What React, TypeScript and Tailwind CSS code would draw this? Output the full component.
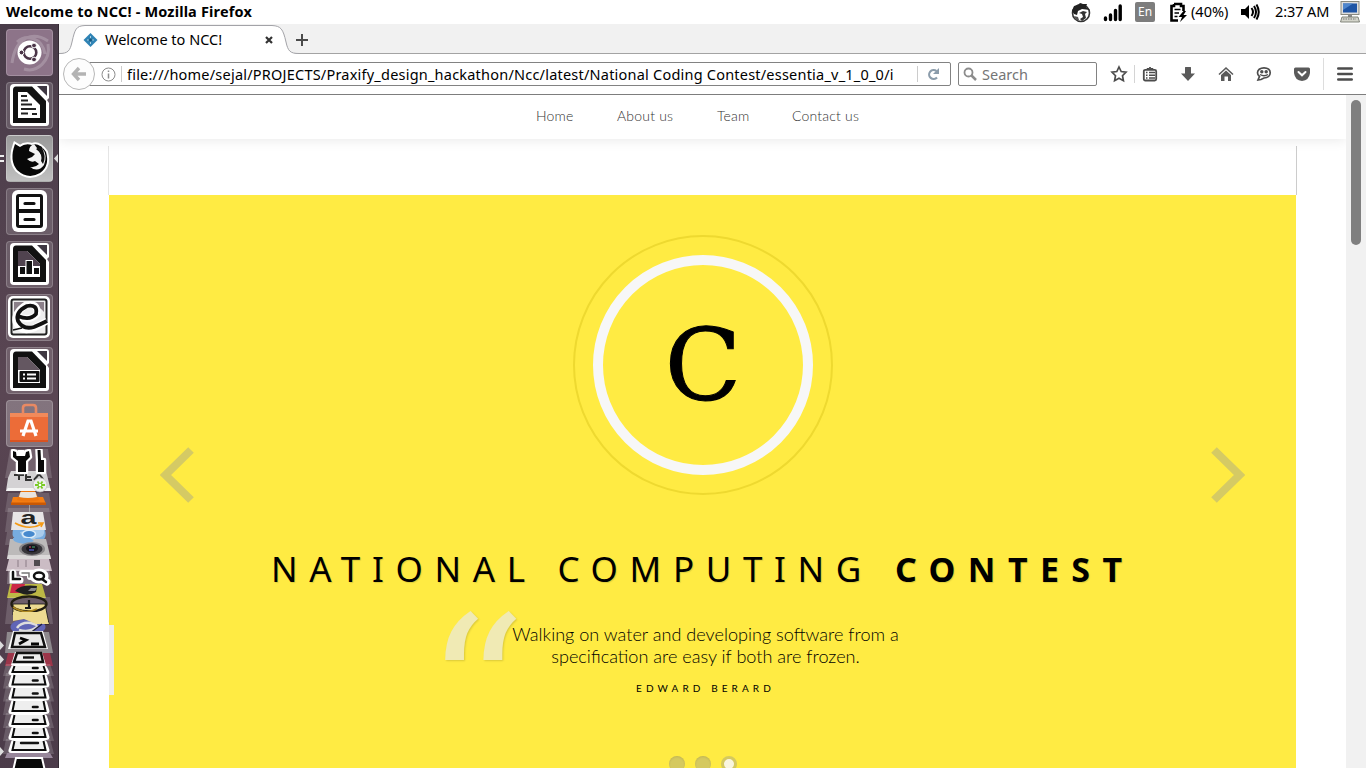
import type { ReactNode } from "react";

const UI = "font-['Noto_Sans',sans-serif]";

function Tile({ children, className = "" }: { children: ReactNode; className?: string }) {
  return (
    <div className={`h-[47px] w-[47px] shrink-0 overflow-hidden rounded-[4px] border border-white/20 ${className || "bg-white/15"}`}>
      <svg viewBox="0 0 47 47" className="-m-px h-[47px] w-[47px]">{children}</svg>
    </div>
  );
}

function Doc({ children }: { children: ReactNode }) {
  return (
    <g>
      <path d="M8 2H40Q43 2 43 5V16L41 18L43 21V41Q43 44 40 44H8Q4 44 4 40V6Q4 2 8 2Z" fill="#fff" />
      <path d="M31 4H41V14Z" fill="#3e3742" />
      <path d="M10 4.500H26L40 19V41H7V8Q7 4.500 10 4.500Z" fill="#111" />
      <path d="M12 10H21L34 23V36H12Z" fill="#fff" />
      {children}
    </g>
  );
}

function Drive({ y, h = 13, dash = "right" }: { y: number; h?: number; dash?: string }) {
  return (
    <g>
      <path d={`M6 ${y - 1}H50L54 ${y + h + 1}H3Z`} fill="#fff" opacity=".16" />
      <path d={`M13 ${y}H44Q46 ${y} 47 ${y + 2}L49.500 ${y + h - 3}Q49.500 ${y + h} 46 ${y + h}H11Q8 ${y + h} 8.500 ${y + h - 3}L11 ${y + 2}Q11 ${y} 13 ${y}Z`} fill="#fff" />
      <path d={`M14.500 ${y + 1}L12.500 ${y + h - 3}H45.500L43.500 ${y + 1}`} fill="#eee" stroke="#0c0c0c" strokeWidth="2" />
      {dash === "right" ? (
        <path d={`M33 ${y + h - 7}H37.500`} stroke="#111" strokeWidth="2.600" strokeLinecap="round" />
      ) : (
        <path d={`M21 ${y + 3}H38`} stroke="#111" strokeWidth="2.4" strokeLinecap="round" />
      )}
    </g>
  );
}

function FoldedStack() {
  return (
    <svg viewBox="0 449 59 319" className="block h-[319px] w-[59px] shrink-0">
      <path d="M10 449H48L52 478H5Z" fill="#fff" opacity=".16" />
      <path d="M8 478L11 471H46L51 491H6Z" fill="#d4d2d4" />
      <path d="M8 488H50L51 491H6Z" fill="#f4f4f4" />
      <path d="M14 475H24M19 475V480M26 474V480H32M26 477H31M34 480L39 474L43 479" fill="none" stroke="#333" strokeWidth="2" />
      <path d="M13 451L16 452L16.500 456H25L26 452L29 451L30 457L26 461V472H18V461L13 457Z" fill="#080808" stroke="#fff" strokeWidth="4.500" strokeLinejoin="round" paintOrder="stroke" />
      <path d="M18 450H24V455H18Z" fill="#fff" />
      <path d="M37.500 450H40.500L41 460H44V472H38V460Z" fill="#080808" stroke="#fff" strokeWidth="4.500" strokeLinejoin="round" paintOrder="stroke" />
      <circle cx="40" cy="485" r="7" fill="#eee" stroke="#bbb" strokeWidth=".7" />
      <path d="M35 485H45M37.500 481.500L42.500 488.500M42.500 481.500L37.500 488.500" stroke="#79cb25" strokeWidth="1.800" />
      <circle cx="40" cy="485" r="1.300" fill="#fff" />
      <path d="M8 493H49L52 512H5Z" fill="#fff" opacity=".14" />
      <path d="M13 497H43L46 504H11Z" fill="#f57e12" />
      <path d="M21 491H35L39 500Q28 503 17 500Z" fill="#ee7711" />
      <path d="M20.500 492H35.500L37 497Q28 499 19 497Z" fill="#e8e4e0" />
      <path d="M11 502.500H46V505H11Z" fill="#c95804" />
      <path d="M29.500 505V513" stroke="#aaa" strokeWidth=".8" />
      <path d="M8 508H49L53 532H5Z" fill="#fff" opacity=".15" />
      <path d="M13 512H43L46 530H11Z" fill="#e7e5e6" />
      <text x="20.500" y="524" textLength="16" lengthAdjust="spacingAndGlyphs" className="font-['Liberation_Sans',sans-serif] text-[19px] font-bold" fill="#222">a</text>
      <path d="M15 523Q29 531 42 524M38 523L43 523L41 527" fill="none" stroke="#f49a15" strokeWidth="1.600" />
      <path d="M7 532H50L52 545H5Z" fill="#fff" opacity=".15" />
      <path d="M13 530H45Q48 541 37 542L32 544L24 542Q10 540 13 530Z" fill="#77acdf" />
      <path d="M20 532L31 530H44Q46 537 36 538L28 544L22 536Z" fill="#a9ccec" />
      <ellipse cx="29" cy="534" rx="6.500" ry="3.800" fill="#4689ce" stroke="#dcecf8" strokeWidth="1.500" />
      <path d="M10 539H46L51 559H7Z" fill="#bcbaba" />
      <path d="M13 538H30L34 541L27 544Q12 543 13 538Z" fill="#77acdf" />
      <path d="M8 555H50L51 559H7Z" fill="#dad8d8" />
      <ellipse cx="32" cy="549" rx="13" ry="7" fill="#8a888a" />
      <ellipse cx="32" cy="549" rx="10.500" ry="5.800" fill="#37353a" />
      <ellipse cx="32" cy="548.500" rx="6" ry="3.800" fill="#17151c" />
      <path d="M29 547H31" stroke="#a04050" strokeWidth="1.300" />
      <path d="M32 547H35" stroke="#3f8a60" strokeWidth="1.300" />
      <path d="M29 550H34" stroke="#5660cc" strokeWidth="1.300" />
      <path d="M9 559H49L52 571H6Z" fill="#cbbcc4" />
      <path d="M18 560V567M26 560V567" stroke="#8b7c86" />
      <path d="M34 560H40V566H34Z" fill="#504c50" />
      <path d="M8 569H49L52 584H7Z" fill="#fff" opacity=".25" />
      <g fill="none" strokeLinecap="round">
        <path d="M13 573V580H20M41 579L47 582" stroke="#fff" strokeWidth="7" />
        <path d="M22 573H30V577" stroke="#fff" strokeWidth="6" />
        <ellipse cx="39" cy="576" rx="6" ry="4" stroke="#fff" strokeWidth="7" />
        <path d="M13 572V579H20M42 579L46 582" stroke="#111" strokeWidth="2.500" />
        <path d="M22 573H29V577" stroke="#777" strokeWidth="1.500" />
        <ellipse cx="39" cy="576" rx="5" ry="3.500" fill="#fff" stroke="#111" strokeWidth="2.500" />
      </g>
      <path d="M10 584H42L46 598H7Z" fill="#bdb845" />
      <path d="M12 584H25L23 593H10Z" fill="#cc2946" />
      <path d="M15 591Q21 584 37 586L36 592Q28 597 20 593Z" fill="#202020" />
      <path d="M31 588H37L35 591H28Z" fill="#888" />
      <path d="M8 597H50L53 624H5Z" fill="#fff" opacity=".16" />
      <path d="M13 604H45L49 624H30L26 616L13 615Z" fill="#eddb91" stroke="#111" strokeWidth=".8" />
      <ellipse cx="29" cy="604" rx="17.500" ry="7.500" fill="none" stroke="#211d12" strokeWidth="2.400" />
      <path d="M13 607Q25 615 37 609" fill="none" stroke="#ad8821" strokeWidth="1.600" />
      <path d="M29 600V608M25 608H31" stroke="#181818" strokeWidth="2.200" />
      <ellipse cx="28" cy="627" rx="17.500" ry="8" fill="#6065b6" />
      <path d="M17 628Q21 622 31 623L37 625M19 630Q31 633 38 626" fill="none" stroke="#ddd" strokeWidth="2.500" />
      <path d="M13 612H44L49 624H36L24 619L13 621Z" fill="#eddb91" />
      <path d="M42 624L29 634" stroke="#202040" strokeWidth="1.500" />
      <path d="M7 632H49L53 653H5Z" fill="#8e898d" />
      <path d="M13 631H43L48 649H8Z" fill="#fff" />
      <path d="M15 633H41L45 647H12Z" fill="#e9e9e9" stroke="#111" strokeWidth="2.500" />
      <path d="M20 638L26 640L19 644M31 644H39" fill="none" stroke="#050505" strokeWidth="2.800" />
      <path d="M8 653H50L53 666H5Z" fill="#9b3549" />
      <path d="M15 652H42L46 665H11Z" fill="#fff" />
      <path d="M17 653H41L43 662H14Z" fill="#eee" stroke="#111" strokeWidth="2.500" />
      <path d="M23 657.500H34" stroke="#111" strokeWidth="2.400" />
      <Drive y={665} h={10} />
      <Drive y={674} h={13.5} />
      <Drive y={687} h={13.5} />
      <Drive y={700} h={14} />
      <Drive y={714} h={13} />
      <Drive y={727} h={13} />
      <Drive y={740} h={13} dash="mid" />
      <path d="M7 753H50L53 758H5Z" fill="#98879b" />
      <path d="M16 758H42L45 771H13Z" fill="#080808" stroke="#fff" strokeWidth="2" />
      <path d="M0 641L4 645.500L0 650ZM0 655L4 659.500L0 664ZM0 747L4 751.500L0 756Z" fill="#ddd" />
    </svg>
  );
}

function Launcher() {
  return (
    <aside className="flex h-[744px] w-[59px] shrink-0 flex-col border-r border-[#332a33] bg-linear-to-b from-[#493c49] via-[#5a4653] to-[#4b3b49]">
      <div className="relative flex h-[425px] flex-col items-center gap-[6px] pt-[5px]">
        <Tile className="bg-[#8d7489]">
          <path d="M6 34C10 6 28 3 42 12M42 15C45 32 31 44 18 40M11 13C20 5 36 8 39 25" fill="none" stroke="#fff" strokeWidth="3" opacity=".2" />
          <circle cx="23.500" cy="23.500" r="12" fill="#fff" />
          <circle cx="24" cy="23.500" r="6.300" fill="none" stroke="#4b3548" strokeWidth="2.600" />
          <g fill="#4b3548" stroke="#fff" strokeWidth="1"><circle cx="15.500" cy="23.500" r="2.400" /><circle cx="28" cy="16.500" r="2.400" /><circle cx="28" cy="30.500" r="2.400" /></g>
        </Tile>
        <Tile><Doc><path d="M15 14H21M15 18.500H22M15 22.500H26M15 27H30M15 31.500H22M26 32H31" stroke="#222" strokeWidth="2" /></Doc></Tile>
        <Tile className="bg-linear-to-b from-[#999] to-[#c0c0c0]">
          <path d="M9 9L14 12Q19 8 26 10Q33 7 40 17Q44 31 34 38Q22 45 11 35Q3 25 9 9Z" fill="#080808" stroke="#fff" strokeWidth="4" paintOrder="stroke" />
          <path d="M28 9Q23 11 23 16L29 19L26 22L21 24Q25 28 29 26L33 29Q29 33 24 32Q32 38 38 30Q42 20 36 13L36 21L31 13Z" fill="#f3f3f3" />
          <path d="M30 14Q37 19 35 26L37 29Q41 21 35 11Z" fill="#111" />
        </Tile>
        <Tile>
          <rect x="6" y="2" width="35" height="42" rx="6" fill="#fff" />
          <rect x="10" y="6" width="27" height="34" rx="3" fill="#111" />
          <path d="M13 9H34V21H13ZM13 25H34V37H13Z" fill="#fff" />
          <path d="M19 15.500H28M19 31.500H28" stroke="#111" strokeWidth="3.200" strokeLinecap="round" />
        </Tile>
        <Tile><Doc><path d="M12 10H21L34 23V25H12Z" fill="#50434f" /><path d="M14 26H19V33H14ZM20.500 20H26V33H20.500ZM28 27H33V33H28Z" fill="#111" stroke="#fff" strokeWidth="2" paintOrder="stroke" /></Doc></Tile>
        <Tile>
          <rect x="2" y="2" width="42" height="42" rx="5" fill="#fff" /><rect x="5.500" y="5.500" width="35" height="35" rx="2" fill="#eee" stroke="#222" strokeWidth="2" />
          <path d="M8 8H38V18Q30 8 18 14L8 27Z" fill="#8b8089" />
          <path d="M11 22Q24 28 31 20Q32 8 20 11Q8 19 10 28Q15 39 28 34L41 27" fill="none" stroke="#fff" strokeWidth="7" />
          <path d="M12 22Q24 27 30 20Q32 10 21 12Q9 18 12 27Q17 36 28 33Q35 30 41 27" fill="none" stroke="#111" strokeWidth="3.800" />
          <path d="M7 36L16 34" stroke="#111" strokeWidth="1.500" />
        </Tile>
        <Tile><Doc><path d="M12 10H21L34 23H12Z" fill="#645761" /><rect x="13.500" y="24" width="20" height="11" rx="1" fill="#111" /><path d="M17 27.500H19M21 27.500H30M17 31.500H19M21 31.500H30" stroke="#fff" strokeWidth="1.800" /></Doc></Tile>
        <Tile className="bg-white/25">
          <path d="M4 13H42V42H4Z" fill="#ec6c38" /><path d="M4 13H42V17H4Z" fill="#f28a5a" /><path d="M4 40H42V42H4Z" fill="#d95322" />
          <path d="M17 14V8Q17 5 20 5H27Q30 5 30 8V14" fill="none" stroke="#e88963" strokeWidth="2.600" />
          <path d="M17 36L22 21H25L30 36M14 31H32" fill="none" stroke="#fff" strokeWidth="3.200" />
        </Tile>
        <svg viewBox="0 0 59 12" className="absolute top-[129px] left-0 h-3 w-[59px]"><path d="M0 3H4M0 8H4" stroke="#eee" strokeWidth="2" /><path d="M58 1V10L54 5.500Z" fill="#ddd" /></svg>
      </div>
      <FoldedStack />
    </aside>
  );
}

function TopPanel() {
  return (
    <header className={`flex h-6 shrink-0 items-center bg-white pl-1.5 text-[14.5px] leading-[22px] text-black ${UI}`}>
      <b className="w-[1064px] pb-0.5 whitespace-nowrap tracking-[0.17px]">Welcome to NCC! - Mozilla Firefox</b>
      <svg viewBox="0 0 22 22" className="h-[22px] w-[22px] shrink-0">
        <circle cx="11" cy="12" r="8.500" fill="#fff" stroke="#333" strokeWidth="1.600" />
        <path d="M2 10L4 5L8 4L10 2L13 3L17 3L16 6L20 9L12 8L8 10L7 14L4 13Z" fill="#222" />
        <path d="M13 10L17 11L15 13L16 17L12 20L10 18L13 16L12 13L9 12Z" fill="#333" /><path d="M4 15L8 16L9 19L6 19Z" fill="#555" />
      </svg>
      <svg viewBox="0 0 20 20" className="ml-[11px] h-5 w-5 shrink-0"><path d="M2.500 16V17.500M7.500 13V17.500M12.500 8.500V17.500M17.200 4V17.500" stroke="#000" strokeWidth="3.400" strokeLinecap="round" /></svg>
      <span className="ml-3 h-5 w-5 shrink-0 rounded-[2px] bg-[#7d7d7d] text-center text-[12px] leading-5 text-white">En</span>
      <svg viewBox="0 0 20 22" className="ml-3.5 h-[22px] w-5 shrink-0">
        <path d="M5 3H12V5H14.500V10M9 19.500H2.500V5H5V3" fill="none" stroke="#000" strokeWidth="2.600" /><path d="M5.500 8.500H11.500M5.500 12H10M5.500 15.500H8.500" stroke="#000" strokeWidth="1.500" /><path d="M14.500 10L9.500 16H13L11 21L18 14H14.500L17 10Z" fill="#000" />
      </svg>
      <span className="ml-[2px] w-[49px] shrink-0 pb-0.5">(40%)</span>
      <svg viewBox="0 0 20 20" className="h-5 w-5 shrink-0"><path d="M1 7H5L9 3V17L5 13H1Z" fill="#000" /><path d="M11.500 6Q14.500 10 11.500 14M14 4Q18 10 14 16M16.500 2.500Q21 10 16.500 17.500" fill="none" stroke="#000" strokeWidth="2" /></svg>
      <span className="ml-[15px] w-[65px] shrink-0 pb-0.5 tracking-[-0.1px] whitespace-nowrap">2:37 AM</span>
      <svg viewBox="0 0 20 22" className="h-[22px] w-5 shrink-0">
        <rect x="1" y="0.500" width="18" height="13" fill="#ddd" stroke="#8a8a80" /><rect x="3" y="2.500" width="14" height="9" fill="#1f55a5" /><path d="M3 2.500H13L3 9Z" fill="#4f86cd" />
        <path d="M8 13.500H12V16H8Z" fill="#888" /><path d="M2 16H18L19.500 21H0.500Z" fill="#d3d4ca" stroke="#777b70" strokeWidth=".9" /><path d="M3 18H16" stroke="#777" strokeWidth="1" strokeDasharray="1.500 1" />
      </svg>
    </header>
  );
}

function TabStrip() {
  return (
    <div className={`relative flex h-[30px] shrink-0 border-b border-[#a3a3a3] bg-[#f1f1f1] text-[14.5px] leading-5 text-black ${UI}`}>
      <svg viewBox="0 0 260 30" className="absolute top-0 left-0 h-[30px] w-[260px]">
        <path d="M0 29.500C9 29.500 11 27 13 18C16 5 17 2 26 1.500H213C222 2 224 5 227 18C229 27 231 29.500 240 29.500V31H0Z" fill="#fff" />
        <path d="M0 29.500C9 29.500 11 27 13 18C16 5 17 2 26 1.500H213C222 2 224 5 227 18C229 27 231 29.500 240 29.500" fill="none" stroke="#a3a3a8" />
      </svg>
      <div className="relative flex h-[31px] items-center pl-6">
        <svg viewBox="0 0 16 16" className="h-4 w-4"><path d="M7.500 1L14.500 8L7.500 15L0.500 8Z" fill="#2f83b5" /><path d="M7.500 4V12M4 8H11" stroke="#b9d8e8" strokeWidth=".9" /><path d="M7.500 6L9.500 8L7.500 10L5.500 8Z" fill="#14577f" /></svg>
        <span className="ml-1.5 w-[160px] pb-0.5 whitespace-nowrap">Welcome to NCC!</span>
        <svg viewBox="0 0 8 8" className="h-2 w-2"><path d="M1 1L7 7M7 1L1 7" stroke="#333" strokeWidth="2.200" /></svg>
        <svg viewBox="0 0 14 14" className="ml-[22px] h-3.5 w-3.5"><path d="M7 1V13M1 7H13" stroke="#4a4a4a" strokeWidth="2" /></svg>
      </div>
    </div>
  );
}

function Toolbar() {
  return (
    <div className={`flex h-[41px] shrink-0 items-center border-b border-[#7d7d7d] bg-white text-[14.5px] text-black ${UI}`}>
      <div className="relative z-10 ml-1 flex h-8 w-8 shrink-0 items-center justify-center rounded-full border border-[#b8b8b8] bg-[#fdfdfd]">
        <svg viewBox="0 0 16 16" className="h-4 w-4"><path d="M8 2L2.500 8L8 14M3 8H15" fill="none" stroke="#b3b3b3" strokeWidth="3.400" /></svg>
      </div>
      <div className="-ml-1.5 flex h-6 w-[862px] shrink-0 items-center rounded-r-[2px] border border-[#828282] bg-white pl-[11px]">
        <svg viewBox="0 0 15 15" className="h-[15px] w-[15px] shrink-0"><circle cx="7.500" cy="7.500" r="6.500" fill="none" stroke="#8c8c8c" /><path d="M7.500 6.500V11.500M7.500 3.500V5" stroke="#8c8c8c" strokeWidth="1.500" /></svg>
        <span className="ml-[5px] h-4 w-px shrink-0 bg-[#ccc]" />
        <span className="ml-[5px] w-[768px] shrink-0 overflow-hidden pb-px leading-5 whitespace-nowrap tracking-[0.215px]">file:///home/sejal/PROJECTS/Praxify_design_hackathon/Ncc/latest/National Coding Contest/essentia_v_1_0_0/i</span>
        <span className="ml-[22px] h-4 w-px shrink-0 bg-[#ccc]" />
        <svg viewBox="0 0 13 13" className="ml-[9px] h-[13px] w-[13px] shrink-0"><path d="M10 9.500A4.500 4.500 0 1 1 9.500 3" fill="none" stroke="#8b9cab" strokeWidth="2.200" /><path d="M12 0V6H6Z" fill="#8b9cab" /></svg>
      </div>
      <div className="ml-[7px] flex h-6 w-[139px] shrink-0 items-center rounded-[2px] border border-[#828282] pl-1 text-[#757575]">
        <svg viewBox="0 0 14 14" className="h-3.5 w-3.5"><circle cx="5.500" cy="5.500" r="4" fill="none" stroke="#8c8c8c" strokeWidth="1.800" /><path d="M8.500 8.500L13 13" stroke="#8c8c8c" strokeWidth="2.500" /></svg>
        <span className="ml-[5px] pb-px leading-5">Search</span>
      </div>
      <svg viewBox="0 0 18 18" className="ml-[13px] h-[18px] w-[18px] shrink-0"><path d="M9 2L11.200 6.500L16 7.200L12.500 10.700L13.400 15.700L9 13.200L4.600 15.700L5.500 10.700L2 7.200L6.800 6.500Z" fill="none" stroke="#4c4c4c" strokeWidth="1.700" /></svg>
      <span className="ml-[6px] h-[18px] w-px shrink-0 bg-[#d4d4d4]" />
      <svg viewBox="0 0 16 16" className="ml-[7px] h-4 w-4 shrink-0"><rect x="1.800" y="3.800" width="12.400" height="10.700" rx="1.500" fill="none" stroke="#4c4c4c" strokeWidth="1.800" /><path d="M5 3.500V2.500H7L8 1L9 2.500H11V3.500Z" fill="#4c4c4c" stroke="#4c4c4c" /><path d="M4 6.500H5.500M7 6.500H13M4 9.200H5.500M7 9.200H13M4 12H5.500M7 12H13" stroke="#4c4c4c" strokeWidth="1.400" /></svg>
      <svg viewBox="0 0 16 16" className="ml-[22px] h-4 w-4 shrink-0"><path d="M5 1.500Q5 1 5.500 1H10.500Q11 1 11 1.500V7.500H15L8 15L1 7.500H5Z" fill="#5a5a5a" /></svg>
      <svg viewBox="0 0 16 16" className="ml-[22px] h-4 w-4 shrink-0"><path d="M1 8.500L8 2L15 8.500" fill="none" stroke="#5a5a5a" strokeWidth="1.600" /><path d="M3 9L8 4.500L13 9V15H10V10.500H6.500V15H3Z" fill="#5a5a5a" /></svg>
      <svg viewBox="0 0 16 16" className="ml-[22px] h-4 w-4 shrink-0"><path d="M8 1.800C12 1.800 14.200 4 14.200 6.800S12 12 8 12L5 13.500L2 14L3.500 10.500Q1.500 9 1.500 6.800C1.500 4 4 1.800 8 1.800Z" fill="none" stroke="#4c4c4c" strokeWidth="1.700" /><circle cx="5.800" cy="5.800" r="1.700" fill="#4c4c4c" /><circle cx="10.200" cy="5.800" r="1.700" fill="#4c4c4c" /><path d="M4 8.500Q8 11 12 8.500" fill="none" stroke="#4c4c4c" strokeWidth="1.400" /></svg>
      <svg viewBox="0 0 16 16" className="ml-[22px] h-4 w-4 shrink-0"><path d="M1.500 1.500H14.500Q16 1.500 16 3V7Q15 14.500 8 15Q1 14.500 0 7V3Q0 1.500 1.500 1.500Z" fill="#5a5a5a" /><path d="M4.500 6L8 9.300L11.500 6" fill="none" stroke="#fff" strokeWidth="2" strokeLinecap="round" /></svg>
      <span className="ml-[13px] h-8 w-px shrink-0 bg-[#ddd]" />
      <svg viewBox="0 0 16 14" className="ml-[13px] h-3.5 w-4 shrink-0"><path d="M1.300 1.500H14.700M1.300 7H14.700M1.300 12.500H14.700" stroke="#4c4c4c" strokeWidth="2.600" strokeLinecap="round" /></svg>
    </div>
  );
}

function Hero() {
  return (
    <section className="relative ml-[50px] h-[573px] w-[1187px] overflow-hidden bg-[#ffeb43] pt-10">
      <div className="ml-[464px] h-[260px] w-[260px] rounded-full border-2 border-[#eed930] p-[18px]">
        <div className="flex h-[220px] w-[220px] justify-center rounded-full border-[10px] border-[#f7f7f7]">
          <span className="font-['DejaVu_Serif',serif] text-[100px] leading-[202px] text-black [-webkit-text-stroke:1px_black]">C</span>
        </div>
      </div>
      <h1 className={`mt-[54px] flex h-10 items-start pl-[162px] leading-10 whitespace-nowrap text-black [text-shadow:1px_1px_1px_#00000020] ${UI}`}>
        <span className="w-[624px] text-[35px] tracking-[11.65px]">NATIONAL COMPUTING</span>
        <b className="text-[34px] tracking-[12.4px]">CONTEST</b>
      </h1>
      <blockquote className="mt-[34px] ml-[392px] h-[73px] w-[409px] text-center font-['Lato',sans-serif] text-[18.1px] leading-[22px] font-light text-black">
        <p>Walking on water and developing software from a<br />specification are easy if both are frozen.</p>
        <cite className="mt-[13px] block text-[10px] leading-4 font-normal tracking-[4.1px] not-italic">EDWARD BERARD</cite>
      </blockquote>
      <div className="mt-[60px] flex gap-2.5 pl-[560px]">
        <span className="h-4 w-4 rounded-full bg-[#d5c95f] shadow-[inset_0_1px_2px_#0000001a]" />
        <span className="h-4 w-4 rounded-full bg-[#d5c95f] shadow-[inset_0_1px_2px_#0000001a]" />
        <span className="h-4 w-4 rounded-full border-[3px] border-[#d5c95f] bg-[#f9f5df]" />
      </div>
      <span className="absolute top-[395px] left-[316px] font-['DejaVu_Serif',serif] text-[198px] leading-[200px] text-[#f0eab4] [text-shadow:1px_1px_2px_#00000025]">“</span>
      <svg viewBox="0 0 34 56" className="absolute top-[252px] left-[51px] h-14 w-[34px]"><path d="M31 3L5.500 28L31 53" fill="none" stroke="#d5ca64" strokeWidth="8" /></svg>
      <svg viewBox="0 0 34 56" className="absolute top-[252px] right-[51px] h-14 w-[34px]"><path d="M3 3L28.500 28L3 53" fill="none" stroke="#d5ca64" strokeWidth="8" /></svg>
      <span className="absolute top-[430px] left-0 h-[70px] w-[5px] bg-[#eee]" />
    </section>
  );
}

export default function App() {
  return (
    <div className="flex h-[768px] w-[1366px] flex-col overflow-hidden bg-white">
      <TopPanel />
      <div className="flex flex-1">
        <Launcher />
        <div className="flex w-[1307px] flex-col">
          <TabStrip />
          <Toolbar />
          <div className="flex h-[673px]">
            <main className="w-[1287px] overflow-hidden bg-white">
              <nav className="relative z-10 flex h-11 items-center bg-white pb-0.5 pl-[477px] font-['Lato',sans-serif] text-[14px] leading-5 font-light tracking-[0.2px] text-[#333] shadow-[0_1px_12px_#00000018]">
                <a className="w-[81px]">Home</a>
                <a className="w-[100px]">About us</a>
                <a className="w-[75px]">Team</a>
                <a>Contact us</a>
              </nav>
              <div className="mt-[7px] ml-[49px] h-[49px] w-[1189px] border-r border-l border-r-[#ccc] border-l-[#e5e5e5]" />
              <Hero />
            </main>
            <div className="w-5 bg-[#f1f1f1] pt-[5px]">
              <div className="mx-auto h-[145px] w-2.5 rounded-full bg-[#7f7f7f]" />
            </div>
          </div>
        </div>
      </div>
    </div>
  );
}
